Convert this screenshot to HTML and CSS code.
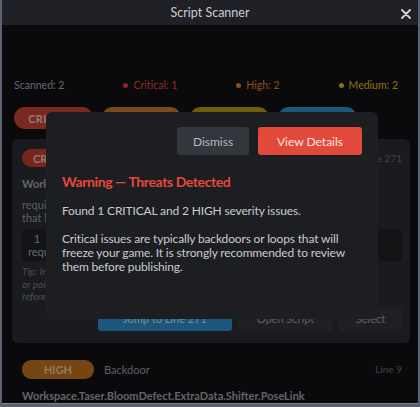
FILE: index.html
```html
<!DOCTYPE html>
<html>
<head>
<meta charset="utf-8">
<link rel="stylesheet" href="styles.css">
</head>
<body>
<div class="window">
  <div class="titlebar">
    <span class="title">Script Scanner</span>
    <svg class="close" width="10" height="10" viewBox="0 0 10 10"><path d="M1 1L9 9M9 1L1 9" stroke="#d4d6db" stroke-width="1.8" stroke-linecap="round"/></svg>
  </div>
  <div class="content">
    <div class="stats">
      <span class="stat scanned">Scanned: 2</span>
      <span class="stat critical"><i class="dot"></i>Critical: 1</span>
      <span class="stat high"><i class="dot"></i>High: 2</span>
      <span class="stat medium"><i class="dot"></i>Medium: 2</span>
    </div>
    <div class="filters">
      <span class="pill p-critical">CRITICAL</span>
      <span class="pill p-high">HIGH</span>
      <span class="pill p-medium">MEDIUM</span>
      <span class="pill p-low">LOW</span>
    </div>
    <div class="list">
      <div class="card">
        <div class="card-head">
          <span class="badge b-critical">CRITICAL</span>
          <span class="kind">Remote require</span>
          <span class="line">Line 271</span>
        </div>
        <div class="path">Workspace.Taser.BloomDefect.ExtraData.Loader</div>
        <div class="desc"><span class="l">require() fetches a module by numeric asset ID and runs its code on</span><span class="l">that load, so it can change anything in your game.</span></div>
        <div class="code"><span class="l">  1  local m = require(4381920331)</span><span class="l">require(4381920331).init()</span></div>
        <div class="tip"><span class="l">Tip: Inspect the module published under this asset ID</span><span class="l">or point the require at a local ModuleScript</span><span class="l">reference instead of a remote one.</span></div>
        <div class="actions">
          <span class="btn btn-blue">Jump to Line 271</span>
          <span class="btn btn-dark">Open Script</span>
          <span class="btn btn-dark btn-sel">Select</span>
        </div>
      </div>
      <div class="item">
        <div class="card-head">
          <span class="badge b-high">HIGH</span>
          <span class="kind">Backdoor</span>
          <span class="line">Line 9</span>
        </div>
        <div class="path">Workspace.Taser.BloomDefect.ExtraData.Shifter.PoseLink</div>
      </div>
    </div>
    <div class="dim"></div>
    <div class="popup">
      <div class="popup-actions">
        <span class="pbtn dismiss">Dismiss</span>
        <span class="pbtn view">View Details</span>
      </div>
      <div class="popup-title">Warning — Threats Detected</div>
      <p class="popup-text">Found 1 CRITICAL and 2 HIGH severity issues.</p>
      <p class="popup-text">Critical issues are typically backdoors or loops that will freeze your game. It is strongly recommended to review them before publishing.</p>
    </div>
  </div>
</div>
</body>
</html>
```
FILE: styles.css
```css
html, body {
  margin: 0;
  padding: 0;
}
body {
  background: #5d6272;
  width: 420px;
  height: 407px;
  overflow: hidden;
  font-family: "Lato", "Noto Sans", sans-serif;
}
.window {
  margin: 0 2px;
  height: 403px;
  background: #111215;
  display: flex;
  flex-direction: column;
  overflow: hidden;
  border-bottom: 1px solid #7c818c;
}
.titlebar {
  height: 25px;
  flex: none;
  background: #202127;
  display: flex;
  align-items: center;
  justify-content: center;
  position: relative;
}
.title {
  color: #c9cbd1;
  font-size: 12.5px;
}
.close {
  position: absolute;
  right: 7px;
  top: 9px;
}
.content {
  position: relative;
  flex: 1;
  padding: 0 8px 0 10px;
  display: flex;
  flex-direction: column;
}
.stats {
  display: flex;
  justify-content: space-between;
  margin-top: 53px;
  padding-left: 2px;
  width: 384px;
  font-size: 10.5px;
  height: 14px;
  align-items: center;
}
.stat { display: flex; align-items: center; }
.dot {
  display: inline-block;
  width: 5px;
  height: 5px;
  border-radius: 50%;
  background: currentColor;
  margin-right: 5px;
}
.scanned { color: #a8acb6; }
.critical { color: #e5463a; }
.high { color: #e5822e; }
.medium { color: #e2bd20; }
.filters {
  display: flex;
  gap: 9px;
  margin-top: 15px;
  padding-left: 2px;
}
.pill {
  width: 79px;
  height: 22px;
  border-radius: 11px;
  display: flex;
  align-items: center;
  justify-content: center;
  color: #f5cfc8;
  font-size: 11px;
  font-weight: 700;
  letter-spacing: 0.3px;
}
.p-critical { background: #cb4536; }
.p-high { background: #cc7a28; }
.p-medium { background: #b89c1a; }
.p-low { background: #2d93d1; }
.list {
  margin-top: 10px;
  display: flex;
  flex-direction: column;
}
.l { display: block; white-space: pre; }
.card {
  background: #2c2e34;
  border-radius: 6px;
  padding: 10px 8px 12px 10px;
}
.card-head {
  display: flex;
  align-items: center;
  gap: 10px;
}
.badge {
  width: 70px;
  height: 18px;
  border-radius: 9px;
  display: flex;
  align-items: center;
  justify-content: center;
  font-size: 11px;
  font-weight: 700;
  color: #f3c9b8;
}
.b-critical { background: #c9402f; }
.b-high { background: #c4741e; color: #f1c9a0; width: 72px; height: 19px; }
.kind { color: #9b9ea6; font-size: 11px; }
.line { margin-left: auto; color: #6d7079; font-size: 10px; }
.path {
  margin-top: 10px;
  color: #a3a6ae;
  font-weight: 700;
  font-size: 11px;
}
.desc {
  margin-top: 8px;
  color: #9b9ea6;
  font-size: 11px;
  line-height: 13px;
}
.code {
  margin-top: 5px;
  background: #202226;
  border-radius: 4px;
  padding: 3px 6px;
  font-size: 11px;
  line-height: 13px;
  color: #a9acb4;
}
.tip {
  margin-top: 4px;
  font-style: italic;
  color: #80838c;
  font-size: 10px;
  line-height: 12.5px;
}
.actions {
  display: flex;
  justify-content: flex-end;
  gap: 7px;
  margin-top: 4px;
}
.btn {
  height: 24px;
  border-radius: 3px;
  display: flex;
  align-items: center;
  justify-content: center;
  font-size: 11px;
}
.btn-blue { background: #2e8fcf; color: #cfe6f5; width: 134px; }
.btn-dark { background: #34363d; color: #9ea1a9; width: 93px; }
.btn-sel { width: 63px; }
.item {
  padding: 17px 8px 0 10px;
}
.item .path { margin-top: 10px; }
.dim {
  position: absolute;
  inset: 0;
  background: rgba(0, 0, 0, 0.4);
}
.popup {
  position: absolute;
  left: 44px;
  top: 87px;
  width: 332px;
  height: 207px;
  box-sizing: border-box;
  background: #1d1e22;
  border-radius: 6px;
  padding: 15px 16px 0 16px;
}
.popup-actions {
  display: flex;
  justify-content: flex-end;
  gap: 9px;
}
.pbtn {
  height: 28px;
  border-radius: 3px;
  display: flex;
  align-items: center;
  justify-content: center;
  font-size: 12px;
}
.dismiss { background: #34363d; color: #b6b9c0; width: 72px; }
.view { background: #e3493b; color: #fbe4e0; width: 104px; }
.popup-title {
  margin-top: 18px;
  color: #e5483a;
  font-weight: 700;
  font-size: 14px;
  letter-spacing: -0.4px;
  line-height: 18px;
}
.popup-text {
  margin: 13px 0 0 0;
  color: #c9cbd0;
  font-size: 12px;
  letter-spacing: -0.15px;
  line-height: 14px;
}
.popup-text + .popup-text { margin-top: 14px; }
```
